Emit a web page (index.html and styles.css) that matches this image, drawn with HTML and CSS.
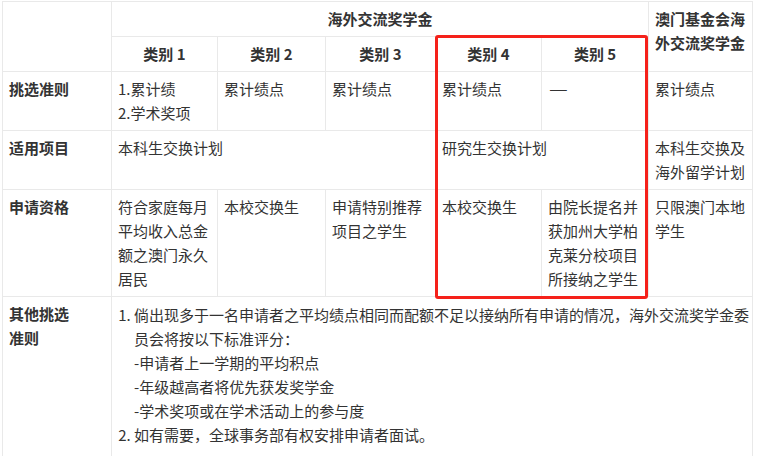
FILE: index.html
```html
<!DOCTYPE html>
<html lang="zh-CN">
<head>
  <meta charset="UTF-8" />
  <meta name="viewport" content="width=device-width, initial-scale=1.0" />
  <title>海外交流奖学金</title>
  <link rel="stylesheet" href="styles.css">
</head>
<body>
  <div class="wrap">
    <table class="grid">
      <colgroup>
        <col style="width: 109px">
        <col style="width: 106px">
        <col style="width: 108px">
        <col style="width: 110px">
        <col style="width: 106px">
        <col style="width: 107px">
        <col style="width: 104px">
      </colgroup>
      <thead>
        <tr>
          <th rowspan="2"></th>
          <th colspan="5" class="center">海外交流奖学金</th>
          <th rowspan="2">澳门基金会海外交流奖学金</th>
        </tr>
        <tr>
          <th class="center">类别 1</th>
          <th class="center">类别 2</th>
          <th class="center">类别 3</th>
          <th class="center">类别 4</th>
          <th class="center">类别 5</th>
        </tr>
      </thead>
      <tbody>
        <tr>
          <th>挑选准则</th>
          <td>1.累计绩<br>2.学术奖项</td>
          <td>累计绩点</td>
          <td>累计绩点</td>
          <td>累计绩点</td>
          <td><span class="dash">—</span></td>
          <td>累计绩点</td>
        </tr>
        <tr>
          <th>适用项目</th>
          <td colspan="3">本科生交换计划</td>
          <td colspan="2">研究生交换计划</td>
          <td>本科生交换及海外留学计划</td>
        </tr>
        <tr>
          <th>申请资格</th>
          <td>符合家庭每月平均收入总金额之澳门永久居民</td>
          <td>本校交换生</td>
          <td>申请特别推荐项目之学生</td>
          <td>本校交换生</td>
          <td>由院长提名并获加州大学柏克莱分校项目所接纳之学生</td>
          <td>只限澳门本地学生</td>
        </tr>
        <tr>
          <th>其他挑选<br>准则</th>
          <td colspan="6" class="notes">
            <ol>
              <li>倘出现多于一名申请者之平均绩点相同而配额不足以接纳所有申请的情况，海外交流奖学金委员会将按以下标准评分：<br>-申请者上一学期的平均积点<br>-年级越高者将优先获发奖学金<br>-学术奖项或在学术活动上的参与度</li>
              <li>如有需要，全球事务部有权安排申请者面试。</li>
            </ol>
          </td>
        </tr>
      </tbody>
    </table>
    <div class="highlight"></div>
  </div>
</body>
</html>
```

FILE: styles.css
```css
body {
  margin: 0;
  padding: 1px 0 0 2px;
  background: #fff;
  font-family: "Microsoft YaHei", "Noto Sans CJK SC", sans-serif;
  font-size: 15px;
  color: #333;
}

.wrap {
  position: relative;
  width: 750px;
}

.grid {
  width: 750px;
  table-layout: fixed;
  border-collapse: collapse;
}

.grid th,
.grid td {
  border: 1px solid #e9e9e9;
  padding: 5px 6px;
  line-height: 24px;
  vertical-align: top;
  text-align: left;
}

.grid th {
  font-weight: 700;
  color: #333;
}

.grid th.center {
  text-align: center;
}

.dash {
  display: inline-block;
  width: 15px;
  margin-left: 1px;
  transform: scaleX(1.4);
  transform-origin: left center;
}

.notes {
  padding-top: 6px !important;
  padding-right: 2px !important;
  padding-bottom: 16px !important;
}

.notes ol {
  margin: 0;
  padding-left: 16px;
}

.highlight {
  position: absolute;
  left: 433px;
  top: 34px;
  width: 207px;
  height: 258px;
  border: 3px solid #f5211a;
  border-radius: 3px;
}
```
